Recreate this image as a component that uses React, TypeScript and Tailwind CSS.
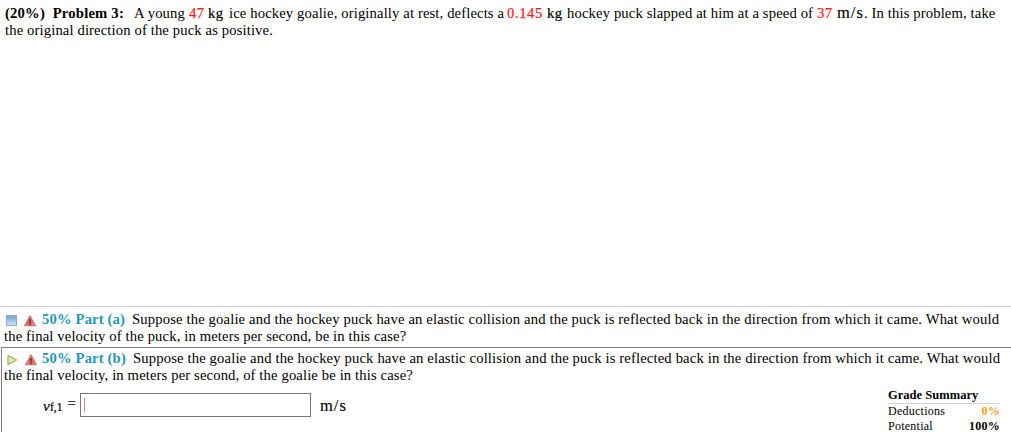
import { useState } from "react";

function WarningIcon() {
  return (
    <svg width="12" height="12" viewBox="0 0 12 12" className="shrink-0">
      <path d="M6 1 L11.2 10.6 H0.8 Z" fill="#e59a9a" stroke="#da6f70" strokeWidth="1.4" strokeLinejoin="round" />
      <path d="M6 3 L9.2 9.4 H2.8 Z" fill="#d25f60" />
      <path d="M6 4 V7.4 M6 8.5 V10" stroke="#5c2020" strokeWidth="1.3" />
    </svg>
  );
}

function CollapsedIcon() {
  return (
    <svg width="12" height="12" viewBox="0 0 12 12" className="shrink-0">
      <defs>
        <linearGradient id="box" x1="0" y1="0" x2="0" y2="1">
          <stop offset="0" stopColor="#6c9fd6" />
          <stop offset="1" stopColor="#d3e4f5" />
        </linearGradient>
      </defs>
      <rect x="0.5" y="0.5" width="10" height="10" fill="url(#box)" stroke="#8aa9cc" />
    </svg>
  );
}

function PlayIcon() {
  return (
    <svg width="12" height="12" viewBox="0 0 12 12" className="shrink-0">
      <path d="M1 1.6 L9.5 6 L1 10.4 Z" fill="#dceeb0" stroke="#98bd58" strokeWidth="1.3" strokeLinejoin="round" />
    </svg>
  );
}

export default function App() {
  const [answer, setAnswer] = useState("");

  return (
    <main className="h-[432px] w-[1011px] overflow-hidden bg-white font-['Liberation_Serif',serif] text-[14.667px] leading-[17px] tracking-[0.125px] text-black">
      {/* Problem statement */}
      <section className="h-[306px] pt-1 pl-[5px] whitespace-pre">
        <div className="flex h-[18px] items-baseline">
          <b className="w-[129px] tracking-[0.19px]">(20%)  Problem 3:</b>
          <span className="w-[55px]">A young</span>
          <span className="w-[19px] tracking-[0.4px] text-[#ff1a1a] [-webkit-text-stroke:0.25px]">47</span>
          <span className="w-[21px] tracking-[0.5px] [-webkit-text-stroke:0.2px]">kg</span>
          <span className="w-[278px]">ice hockey goalie, originally at rest, deflects a</span>
          <span className="w-[40px] tracking-[0.6px] text-[#ff1a1a] [-webkit-text-stroke:0.25px]">0.145</span>
          <span className="w-[20px] tracking-[0.5px] [-webkit-text-stroke:0.2px]">kg</span>
          <span className="w-[250px] tracking-[0.13px]">hockey puck slapped at him at a speed of</span>
          <span className="w-[20px] tracking-[0.4px] text-[#ff1a1a] [-webkit-text-stroke:0.25px]">37</span>
          <span className="w-[27px] text-[16.5px] tracking-[1px] [-webkit-text-stroke:0.15px]">m/s</span>
          <span>. In this problem, take</span>
        </div>
        <p>the original direction of the puck as positive.</p>
      </section>

      {/* Part (a) */}
      <section className="h-[41px] border-t border-[#d3d3d3] pt-1 pl-1 whitespace-pre">
        <div className="flex items-center">
          <div className="mr-[6px] ml-[2px] flex gap-[6px] pt-[3px]">
            <CollapsedIcon />
            <WarningIcon />
          </div>
          <b className="w-[90px] tracking-[0.14px] text-[#2597b8]">50% Part (a)</b>
          <span className="tracking-[0.14px]">Suppose the goalie and the hockey puck have an elastic collision and the puck is reflected back in the direction from which it came. What would</span>
        </div>
        <p>the final velocity of the puck, in meters per second, be in this case?</p>
      </section>

      {/* Part (b) */}
      <section className="ml-px h-[85px] border-t border-l border-[#808080] pt-[2px] pl-[2px] whitespace-pre">
        <div className="flex items-center">
          <div className="mr-[5px] ml-[3px] flex gap-[6px] pt-[3px]">
            <PlayIcon />
            <WarningIcon />
          </div>
          <b className="w-[91px] tracking-[0.14px] text-[#2597b8]">50% Part (b)</b>
          <span className="tracking-[0.14px]">Suppose the goalie and the hockey puck have an elastic collision and the puck is reflected back in the direction from which it came. What would</span>
        </div>
        <p>the final velocity, in meters per second, of the goalie be in this case?</p>

        <div className="flex justify-between">
          <div className="mt-[9px] flex h-6 items-center pl-[39px]">
            <label htmlFor="velocity" className="flex w-[37px] [-webkit-text-stroke:0.2px]">
              <i className="w-[7px] pt-[2px] text-[15.5px]">v</i>
              <span className="pt-[4px] text-[11.5px] tracking-normal">f,1</span>
              <span className="mr-[4px] ml-auto">=</span>
            </label>
            <div className="flex h-6 w-[231px] items-center border border-[#767676] pl-[3px]">
              <span className="h-[14px] w-px bg-[#ff69b4]" />
              <input
                id="velocity"
                value={answer}
                onChange={(e) => setAnswer(e.target.value)}
                className="h-full min-w-0 flex-1 outline-none"
              />
            </div>
            <span className="ml-[9px] text-[16.5px] tracking-[1px] [-webkit-text-stroke:0.15px]">m/s</span>
          </div>

          <div className="mt-1 mr-[11px] w-28 text-[12px] leading-[15px] tracking-[0.25px]">
            <b className="block border-b border-[#d3d3d3] text-[12.5px] tracking-[0.03px]">Grade Summary</b>
            <div className="flex justify-between">
              <span>Deductions</span>
              <b className="text-[#ffa01e]">0%</b>
            </div>
            <div className="flex justify-between">
              <span>Potential</span>
              <b>100%</b>
            </div>
          </div>
        </div>
      </section>
    </main>
  );
}
